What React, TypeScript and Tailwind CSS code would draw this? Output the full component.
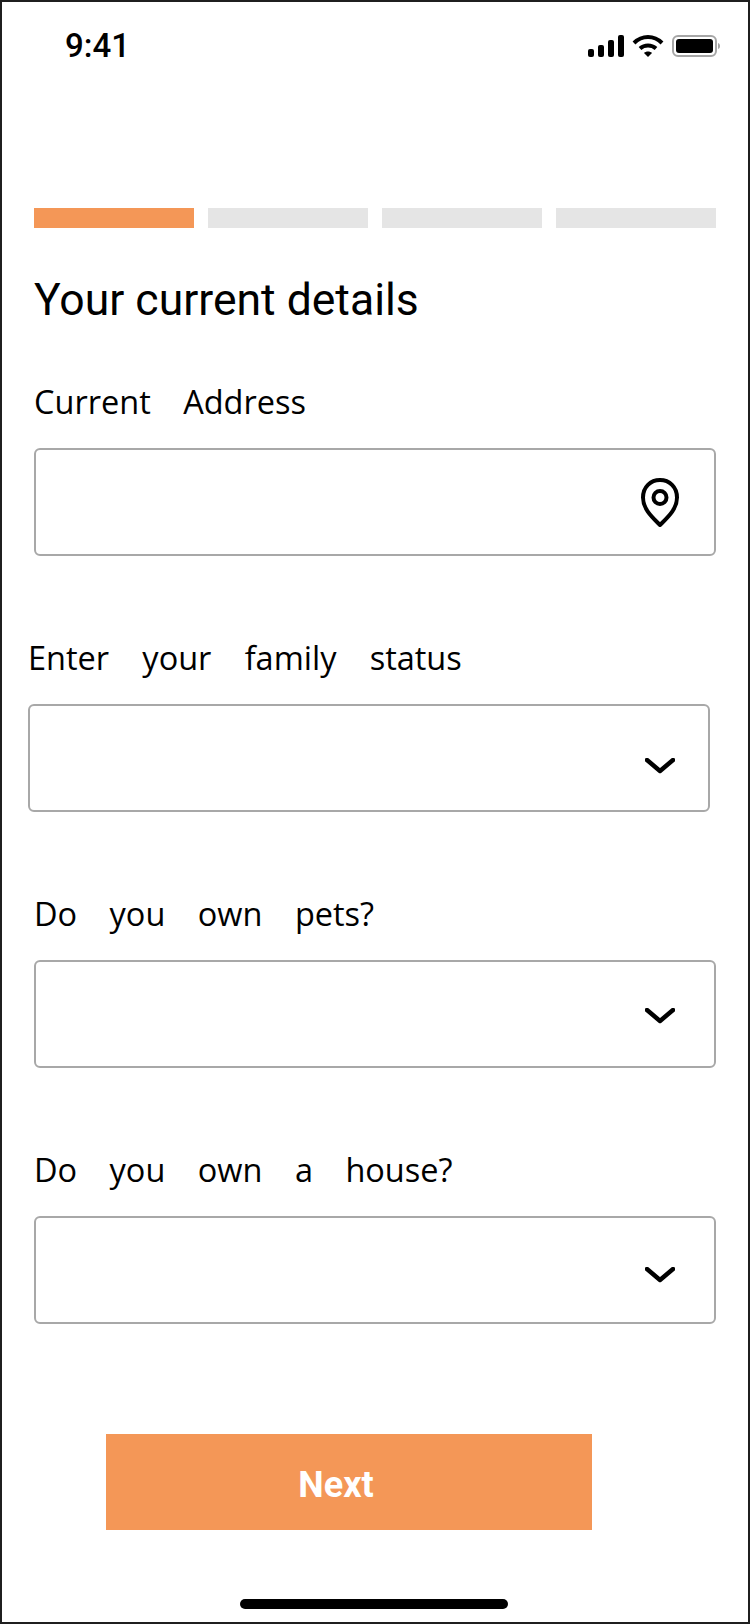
const labelFont = "font-['Open_Sans',sans-serif] text-[32.5px] leading-[40px] text-black";

function StatusIcons() {
  return (
    <div className="flex items-center gap-[8px]">
      <svg width="36" height="22" viewBox="0 0 36 22" fill="#000">
        <rect x="0" y="14" width="6" height="8" rx="2" />
        <rect x="10" y="10" width="6" height="12" rx="2" />
        <rect x="20" y="5" width="6" height="17" rx="2" />
        <rect x="30" y="0" width="6" height="22" rx="2" />
      </svg>
      <svg width="32" height="22" viewBox="0 0 32 22" fill="none" stroke="#000" strokeWidth="4">
        <path d="M2 8 C10 0 22 0 30 8" />
        <path d="M8 13.5 C12.5 9.5 19.5 9.5 24 13.5" />
        <path d="M12 18 L16 22 L20 18 C18 16 14 16 12 18 Z" fill="#000" stroke="none" />
      </svg>
      <svg width="48" height="22" viewBox="0 0 48 22">
        <rect x="1" y="1" width="43" height="20" rx="5" fill="none" stroke="#a6a6a6" strokeWidth="2" />
        <rect x="4" y="4" width="37" height="14" rx="3" fill="#000" />
        <path d="M46 8 C47.5 8.5 48 9.5 48 11 C48 12.5 47.5 13.5 46 14 Z" fill="#a6a6a6" />
      </svg>
    </div>
  );
}

function Pin() {
  return (
    <svg width="40" height="50" viewBox="0 0 40 50" fill="none" stroke="#000" strokeWidth="4" strokeLinejoin="round">
      <path d="M20 48 C12 40 3 32 3 20.5 C3 10 10.5 3 20 3 C29.5 3 37 10 37 20.5 C37 32 28 40 20 48 Z" />
      <circle cx="20" cy="20.5" r="6.5" />
    </svg>
  );
}

function Chevron() {
  return (
    <svg width="30" height="16" viewBox="0 0 30 16" fill="none" stroke="#000" strokeWidth="4.5" strokeLinecap="round" strokeLinejoin="round">
      <path d="M2 2 L15 13 L28 2" />
    </svg>
  );
}

function Field({ label, box, children }: { label: string; box: string; children: React.ReactNode }) {
  const shifted = label.startsWith("Enter");
  return (
    <div className={shifted ? "-ml-[6px] mr-[6px]" : ""}>
      <p className={`${labelFont} ${shifted ? "[word-spacing:24.8px]" : "[word-spacing:24px]"}`}>{label}</p>
      <div className={`mt-[26px] flex h-[108px] justify-end rounded-[6px] border-2 border-[#a8a8a8] bg-white ${box}`}>
        {children}
      </div>
    </div>
  );
}

export default function App() {
  return (
    <div className="flex h-[1624px] w-[750px] flex-col overflow-hidden border-2 border-[#1f1f1f] bg-white">
      <div className="flex h-[62px] shrink-0 items-center justify-between pl-[63px] pr-[28px] pt-[26px]">
        <span className="font-['Roboto',sans-serif] text-[33px] font-medium leading-[40px] text-black">9:41</span>
        <StatusIcons />
      </div>

      <div className="mt-[144px] flex shrink-0 gap-[14px] px-[32px]">
        <div className="h-[20px] flex-1 bg-[#f49757]" />
        <div className="h-[20px] flex-1 bg-[#e5e5e5]" />
        <div className="h-[20px] flex-1 bg-[#e5e5e5]" />
        <div className="h-[20px] flex-1 bg-[#e5e5e5]" />
      </div>

      <div className="flex shrink-0 flex-col px-[32px]">
        <h1 className="mt-[48px] font-['Roboto',sans-serif] text-[44.5px] font-normal leading-[48px] text-black">Your current details</h1>
        <div className="mt-[58px] flex flex-col gap-[82px]">
          <Field label="Current Address" box="pr-[34px] pt-[27px]"><Pin /></Field>
          <Field label="Enter your family status" box="pr-[33px] pt-[52px]"><Chevron /></Field>
          <Field label="Do you own pets?" box="pr-[39px] pt-[46px]"><Chevron /></Field>
          <Field label="Do you own a house?" box="pr-[39px] pt-[49px]"><Chevron /></Field>
        </div>
      </div>

      <button className="ml-[104px] mt-[110px] h-[96px] w-[486px] shrink-0 bg-[#f49757] pr-[26px] pt-[6px] font-['Roboto',sans-serif] text-[36px] font-bold text-white">
        Next
      </button>

      <div className="ml-[238px] mt-[69px] h-[10px] w-[268px] shrink-0 rounded-full bg-black" />
    </div>
  );
}
